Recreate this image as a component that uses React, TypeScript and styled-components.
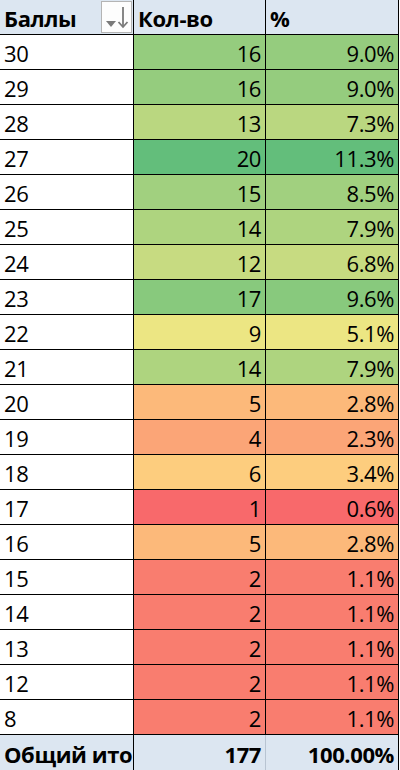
import React from 'react';
import styled, { createGlobalStyle } from 'styled-components';

const GlobalStyle = createGlobalStyle`
    html, body {
        margin: 0;
        padding: 0;
        background: #ffffff;
    }
    body {
        font-family: "Open Sans", "Noto Sans", sans-serif;
    }
`;

const rows: [number, number][] = [
    [30, 16], [29, 16], [28, 13], [27, 20], [26, 15], [25, 14], [24, 12],
    [23, 17], [22, 9], [21, 14], [20, 5], [19, 4], [18, 6], [17, 1],
    [16, 5], [15, 2], [14, 2], [13, 2], [12, 2], [8, 2],
];

const total = rows.reduce((s, [, n]) => s + n, 0);

// excel 3-colour scale: min red, 50th percentile yellow, max green
const RED = [248, 105, 107];
const YELLOW = [255, 235, 132];
const GREEN = [99, 190, 123];

const mix = (a: number[], b: number[], t: number) =>
    `rgb(${a.map((v, i) => Math.round(v + (b[i] - v) * t)).join(',')})`;

const scaleColor = (v: number, min: number, mid: number, max: number) =>
    v <= mid ? mix(RED, YELLOW, (v - min) / (mid - min)) : mix(YELLOW, GREEN, (v - mid) / (max - mid));

const sorted = rows.map(([, n]) => n).sort((a, b) => a - b);
const median = (sorted[9] + sorted[10]) / 2;
const minV = sorted[0];
const maxV = sorted[sorted.length - 1];

const Table = styled.div`
    display: grid;
    grid-template-columns: 134px 132px 133px;
    width: 399px;
    font-size: 22px;
    color: #000;
`;

const Cell = styled.div<{ $bg?: string; $right?: boolean; $bold?: boolean; $line?: string; $bottom?: boolean }>`
    box-sizing: border-box;
    height: 35px;
    display: flex;
    align-items: flex-end;
    justify-content: ${({ $right }) => ($right ? 'flex-end' : 'flex-start')};
    padding: 0 4px 1px 4px;
    background: ${({ $bg }) => $bg || '#ffffff'};
    border-right: 1px solid ${({ $line }) => $line || '#000'};
    border-bottom: ${({ $bottom }) => ($bottom === false ? 'none' : '1px solid #000')};
    font-weight: ${({ $bold }) => ($bold ? 700 : 400)};
    white-space: nowrap;
    overflow: hidden;
    position: relative;
    letter-spacing: -0.4px;
`;

const HEAD_BG = '#dce6f1';

const FilterButton = styled.div`
    position: absolute;
    right: 1px;
    top: 1px;
    width: 31px;
    height: 32px;
    box-sizing: border-box;
    border: 1px solid #b4b4b4;
    background: #fdfdfd;
    display: flex;
    align-items: center;
    justify-content: center;
`;

const SortIcon = () => (
    <svg width="29" height="30" viewBox="0 0 29 30">
        <path d="M4 19 L14 19 L9 25 Z" fill="#7a7a7a" />
        <path d="M21 5 L21 25" stroke="#7a7a7a" strokeWidth="1.8" />
        <path d="M16.5 20 L21 25 L25.5 20" stroke="#7a7a7a" strokeWidth="1.8" fill="none" />
    </svg>
);

export default function App() {
    return (
        <>
            <GlobalStyle />
            <Table>
                <Cell $bg={HEAD_BG} $bold>
                    Баллы
                    <FilterButton>
                        <SortIcon />
                    </FilterButton>
                </Cell>
                <Cell $bg={HEAD_BG} $bold>Кол-во</Cell>
                <Cell $bg={HEAD_BG} $bold>%</Cell>
                {rows.map(([score, n]) => {
                    const bg = scaleColor(n, minV, median, maxV);
                    return (
                        <React.Fragment key={score}>
                            <Cell>{score}</Cell>
                            <Cell $bg={bg} $right>{n}</Cell>
                            <Cell $bg={bg} $right>{((n / total) * 100).toFixed(1)}%</Cell>
                        </React.Fragment>
                    );
                })}
                <Cell $bg={HEAD_BG} $bold $bottom={false}>Общий итог</Cell>
                <Cell $bg={HEAD_BG} $bold $right $bottom={false} $line="#b8c4d2">{total}</Cell>
                <Cell $bg={HEAD_BG} $bold $right $bottom={false}>100.00%</Cell>
            </Table>
        </>
    );
}
